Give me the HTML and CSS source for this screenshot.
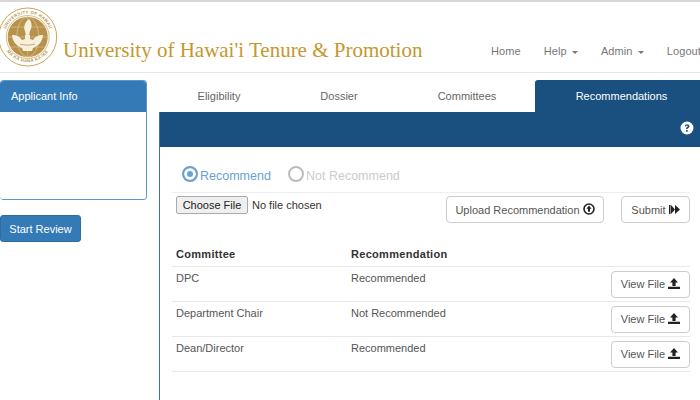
FILE: index.html
```html
<!DOCTYPE html>
<html lang="en">
<head>
<meta charset="utf-8">
<title>University of Hawai'i Tenure &amp; Promotion</title>
<link rel="stylesheet" href="styles.css">
</head>
<body>
<header class="topbar">
  <div class="brand">
    <svg class="seal" width="58" height="62" viewBox="0 0 58 62" aria-hidden="true">
      <defs>
        <path id="arcTop" d="M4.500 31a23.200 23.200 0 0 1 46.400 0"/>
        <path id="arcBot" d="M2.500 31a25.200 25.200 0 0 0 50.400 0"/>
      </defs>
      <circle cx="27.700" cy="31" r="29" fill="#fff" stroke="#c9a458" stroke-width="1"/>
      <text class="seal-text"><textPath href="#arcTop" startOffset="50%" text-anchor="middle">UNIVERSITY OF HAWAII</textPath></text>
      <text class="seal-text"><textPath href="#arcBot" startOffset="50%" text-anchor="middle">MA KA HANA KA IKE</textPath></text>
      <circle cx="27.700" cy="31" r="20.500" fill="#b8924a" stroke="#fff" stroke-width=".8"/>
      <circle cx="27.700" cy="31" r="21.500" fill="none" stroke="#c9a458" stroke-width=".7"/>
      <ellipse cx="27.700" cy="31" rx="11" ry="20" fill="none" stroke="#dcc795" stroke-width=".7"/>
      <path d="M8 31h40M10.500 21h34M10.500 41h34M27.700 11v40" stroke="#dcc795" stroke-width=".6"/>
      <path d="M29 13c3 3 3.500 8 1 12l-1 5h-3l-1-5c-2-4 0-9 4-12z" fill="#f7f0df"/>
      <path d="M12 29c5 0 8 2 10 5l3-1v-4h5v4l3 1c2-3 5-5 10-5-.5 7-5 11-10 13l-1 3h-9l-1-3c-5-2-9.500-6-10-13z" fill="#f7f0df"/>
      <path d="M20 38c5 1.500 10 1.500 15 0" fill="none" stroke="#b8924a" stroke-width=".8"/>
    </svg>
    <h1 class="title">University of Hawai'i Tenure &amp; Promotion</h1>
  </div>
  <nav class="nav">
    <a class="nav-link">Home</a>
    <a class="nav-link">Help <span class="caret"></span></a>
    <a class="nav-link">Admin <span class="caret"></span></a>
    <a class="nav-link">Logout</a>
  </nav>
</header>

<div class="layout">
  <aside class="sidebar">
    <section class="panel">
      <div class="panel-head">Applicant Info</div>
      <div class="panel-body"></div>
    </section>
    <button class="btn-primary" type="button">Start Review</button>
  </aside>

  <main class="main">
    <div class="tabs">
      <a class="tab tab-a">Eligibility</a>
      <a class="tab tab-b">Dossier</a>
      <a class="tab tab-c">Committees</a>
      <a class="tab tab-active">Recommendations</a>
    </div>
    <div class="content">
      <div class="band">
        <svg class="help" width="14" height="14" viewBox="0 0 14 14" aria-hidden="true">
          <circle cx="7" cy="7" r="6.500" fill="#fff"/>
          <path d="M4.600 5.300C4.800 3.900 5.800 3.200 7.100 3.200c1.400 0 2.400.8 2.400 2 0 1-.6 1.400-1.200 1.800-.5.3-.7.5-.7 1.100H6c0-1 .3-1.500 1-2 .5-.3.8-.5.8-.9 0-.4-.3-.7-.8-.7-.5 0-.8.3-.9.9z" fill="#1a5080"/>
          <rect x="6" y="9" width="1.700" height="1.700" fill="#1a5080"/>
        </svg>
      </div>
      <div class="pane">
        <div class="radios">
          <span class="radio radio-on"><span class="ring"></span>Recommend</span>
          <span class="radio radio-off"><span class="ring"></span>Not Recommend</span>
        </div>
        <div class="upload">
          <div class="file"><span class="file-btn">Choose File</span><span class="file-name">No file chosen</span></div>
          <div class="upload-actions">
            <button class="btn btn-upload" type="button">Upload Recommendation
              <svg width="12" height="12" viewBox="0 0 12 12" aria-hidden="true"><circle cx="6" cy="6" r="5" fill="none" stroke="#222" stroke-width="1.600"/><path d="M6 2.600 8.600 5.800H7v3H5v-3H3.400z" fill="#222"/></svg>
            </button>
            <button class="btn btn-submit" type="button">Submit
              <svg width="11" height="11" viewBox="0 0 11 11" aria-hidden="true"><path d="M0 1h1.500v9H0zM2 1l4 4.500L2 10zM6 1l5 4.500L6 10z" fill="#222"/></svg>
            </button>
          </div>
        </div>
        <table class="grid">
          <thead>
            <tr><th class="c1">Committee</th><th class="c2">Recommendation</th><th></th></tr>
          </thead>
          <tbody>
            <tr><td>DPC</td><td>Recommended</td><td class="c3"><button class="btn btn-view" type="button">View File <svg width="12" height="11" viewBox="0 0 12 11" aria-hidden="true"><path d="M6 0 10 4.500H7.600V8H4.400V4.500H2zM0 8.800h12V11H0z" fill="#222"/></svg></button></td></tr>
            <tr><td>Department Chair</td><td>Not Recommended</td><td class="c3"><button class="btn btn-view" type="button">View File <svg width="12" height="11" viewBox="0 0 12 11" aria-hidden="true"><path d="M6 0 10 4.500H7.600V8H4.400V4.500H2zM0 8.800h12V11H0z" fill="#222"/></svg></button></td></tr>
            <tr><td>Dean/Director</td><td>Recommended</td><td class="c3"><button class="btn btn-view" type="button">View File <svg width="12" height="11" viewBox="0 0 12 11" aria-hidden="true"><path d="M6 0 10 4.500H7.600V8H4.400V4.500H2zM0 8.800h12V11H0z" fill="#222"/></svg></button></td></tr>
          </tbody>
        </table>
      </div>
    </div>
  </main>
</div>
</body>
</html>
```

FILE: styles.css
```css
* { box-sizing: border-box; }
html, body { margin: 0; height: 100%; overflow: hidden; }
body {
  background: #fff;
  font-family: "Liberation Sans", Arial, sans-serif;
  font-size: 11px;
  color: #555;
}
.topbar {
  height: 73px;
  border-top: 2px solid #d8d8d8;
  border-bottom: 1px solid #e7e7e7;
  display: flex;
  justify-content: space-between;
}
.brand { display: flex; align-items: flex-start; padding-top: 4px; }
.seal { flex: none; overflow: visible; }
.seal-text {
  font: 700 4.300px "Liberation Sans", Arial, sans-serif;
  fill: #b8924a;
  letter-spacing: .35px;
}
.title {
  margin: 31px 0 0 5px;
  font-family: "Liberation Serif", "Times New Roman", serif;
  font-weight: 400;
  font-size: 21px;
  line-height: 26px;
  color: #c4982f;
  white-space: nowrap;
}
.nav { display: flex; padding-top: 42px; flex: none; margin-right: -1px; }
.nav-link { margin-left: 23px; line-height: 14px; color: #777; white-space: nowrap; letter-spacing: .1px; }
.caret {
  display: inline-block;
  margin-left: 2px;
  vertical-align: middle;
  border-top: 3px solid #777;
  border-left: 3px solid transparent;
  border-right: 3px solid transparent;
}
.layout { display: flex; padding-top: 7px; }
.sidebar { width: 159px; flex: none; }
.panel {
  width: 147px;
  border: 1px solid #5b95c9;
  border-left: 0;
  border-radius: 4px;
  overflow: hidden;
}
.panel-head {
  height: 31px;
  background: #337ab7;
  color: #fff;
  padding: 7px 0 0 11px;
  line-height: 16px;
}
.panel-body { height: 87px; background: #fff; }
.btn-primary {
  display: block;
  margin-top: 15px;
  width: 81px;
  height: 27px;
  padding: 0;
  background: #337ab7;
  border: 1px solid #2e6da4;
  border-radius: 3px;
  color: #fff;
  font: 11px "Liberation Sans", Arial, sans-serif;
}
.main { flex: 1; min-width: 0; }
.tabs { display: flex; height: 32px; }
.tab { line-height: 32px; text-align: center; color: #666; }
.tab-a { width: 120px; }
.tab-b { width: 120px; }
.tab-c { width: 136px; }
.tab-active {
  flex: 1;
  background: #1a5080;
  color: #fff;
  border-radius: 3px 0 0 0;
  padding-left: 8px;
}
.content { border-left: 1px solid #3c74a6; height: 300px; }
.band {
  height: 35px;
  background: #1a5080;
  display: flex;
  justify-content: flex-end;
  padding: 9px 6px 0 0;
}
.pane { padding: 16px 10px 0 12px; }
.radios {
  display: flex;
  height: 30px;
  border-bottom: 1px solid #eee;
  padding-left: 10px;
  font-size: 12.500px;
}
.radio { display: flex; align-items: flex-start; line-height: 27px; }
.radio-on { color: #6aa0d4; width: 106px; }
.radio-off { color: #ccc; }
.ring {
  width: 16px;
  height: 16px;
  margin: 3px 2px 0 0;
  border-radius: 50%;
  background: #fff;
  border: 2px solid #bbb;
}
.radio-on .ring { border-color: #6aa0d4; box-shadow: inset 0 0 0 3px #fff; background: #6aa0d4; }
.upload { display: flex; justify-content: space-between; padding: 3px 0 0 4px; height: 60px; }
.file { display: flex; align-items: center; height: 18px; color: #333; }
.file-btn {
  width: 72px;
  text-align: center;
  height: 18px;
  line-height: 16px;
  background: #efefef;
  border: 1px solid #aaa;
  border-radius: 2px;
  color: #222;
  margin-right: 4px;
}
.upload-actions { display: flex; gap: 17px; }
.btn {
  background: #fff;
  border: 1px solid #ccc;
  border-radius: 4px;
  color: #555;
  font: 11px "Liberation Sans", Arial, sans-serif;
  padding: 0;
  height: 27px;
  white-space: nowrap;
}
.btn svg { vertical-align: -1px; }
.btn-upload { width: 158px; }
.btn-submit { width: 69px; }
.btn-view { width: 79px; }
.grid { width: 100%; border-collapse: collapse; margin-top: -8px; table-layout: fixed; }
.grid th {
  text-align: left;
  color: #333;
  font-size: 11px;
  letter-spacing: .3px;
  height: 21px;
  padding: 0 0 3px 4px;
  border-bottom: 1px solid #e8e8e8;
}
.c1 { width: 175px; }
.c2 { width: 260px; }
.grid td {
  height: 35px;
  padding: 5px 0 0 4px;
  vertical-align: top;
  border-bottom: 1px solid #e8e8e8;
}
.grid td.c3 { text-align: right; padding: 4px 0 0 0; }
```
